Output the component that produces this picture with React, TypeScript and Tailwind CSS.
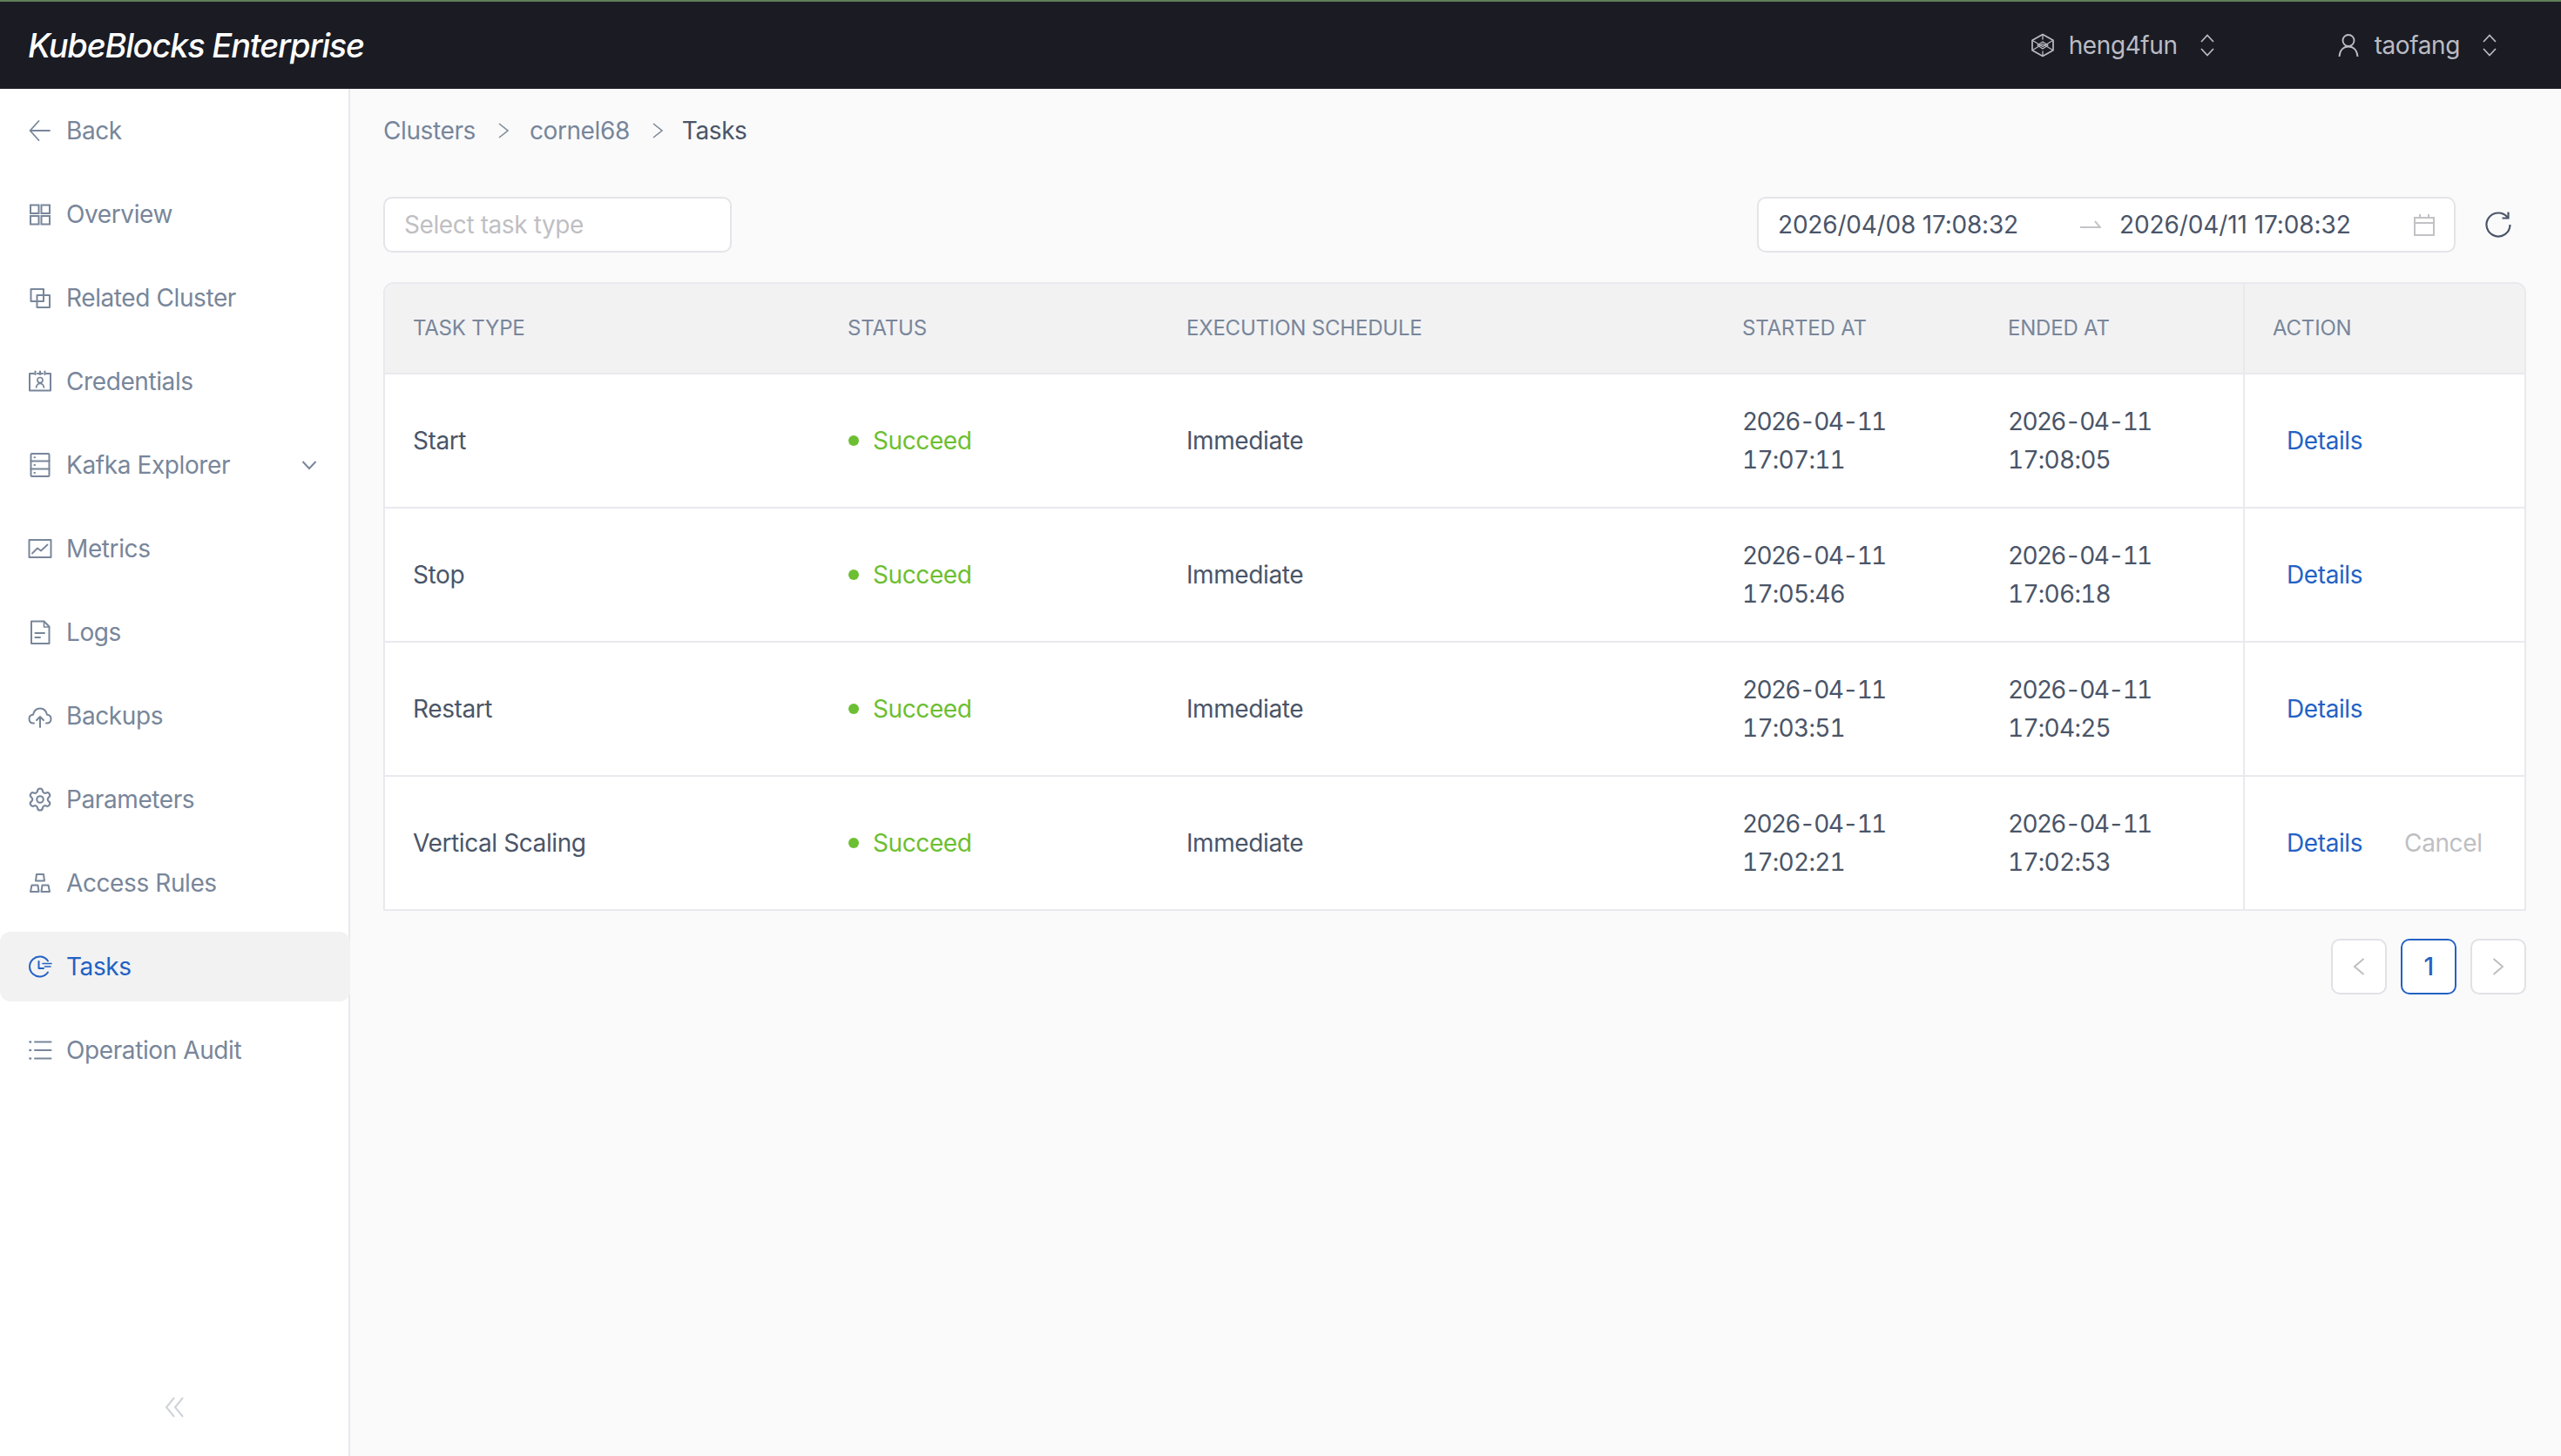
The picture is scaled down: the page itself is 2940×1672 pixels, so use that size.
import { Settings } from 'lucide-react'
import type { ReactNode } from 'react'

const stroke = {
  fill: 'none',
  stroke: 'currentColor',
  strokeWidth: 2,
  strokeLinecap: 'round' as const,
  strokeLinejoin: 'round' as const,
}

function Ico({ children }: { children: ReactNode }) {
  return (
    <svg viewBox="0 0 28 28" className="w-7 h-7 shrink-0" {...stroke}>
      {children}
    </svg>
  )
}

const icons: Record<string, ReactNode> = {
  back: (
    <Ico>
      <path d="M3 14H25M12.5 3L2.5 14L12.5 25" strokeWidth={1.8} />
    </Ico>
  ),
  overview: (
    <Ico>
      <rect x="3" y="3.5" width="9.5" height="9.5" strokeLinejoin="miter" />
      <rect x="15.5" y="3.5" width="9.5" height="9.5" strokeLinejoin="miter" />
      <rect x="3" y="16" width="9.5" height="9.5" strokeLinejoin="miter" />
      <rect x="15.5" y="16" width="9.5" height="9.5" strokeLinejoin="miter" />
    </Ico>
  ),
  related: (
    <Ico>
      <rect x="3.5" y="4" width="14.5" height="14" />
      <rect x="10.5" y="11" width="14.5" height="14" />
    </Ico>
  ),
  credentials: (
    <Ico>
      <path d="M7 5H2V24.5H26V5H21M11 5H17" />
      <path d="M8.5 2.5V6M14 2.5V6M19.5 2.5V6" />
      <circle cx="14" cy="12.5" r="3" strokeWidth={1.7} />
      <path d="M9.5 21C10 18 11.8 16.5 14 16.5S18 18 18.5 21" strokeWidth={1.7} />
    </Ico>
  ),
  kafka: (
    <Ico>
      <rect x="3.5" y="1" width="21" height="26" rx="1" />
      <path d="M3.5 9.5H24.5M3.5 18.5H24.5" />
      <path d="M7.5 5.2H8M7.5 14H8M7.5 23H8" />
    </Ico>
  ),
  metrics: (
    <Ico>
      <rect x="1.5" y="4" width="25" height="20" />
      <path d="M5 19.5L11 13.5L15 16.5L22.5 9.5" strokeWidth={1.8} />
    </Ico>
  ),
  logs: (
    <Ico>
      <path d="M4 1.5H18.5L24.5 7.5V27H4Z" />
      <path d="M18.5 1.5V8H24.5" strokeWidth={1.6} />
      <path d="M8.5 15H19M8.5 20H14" />
    </Ico>
  ),
  backups: (
    <Ico>
      <path d="M7 22.5H6.5C3.5 22.5 1.5 20.5 1.5 17.5C1.5 14.8 3.5 13 6 12.8C7 8 10 5.5 14 5.5S21 8 22 12.8C24.5 13 26.5 14.8 26.5 17.5C26.5 20.5 24.5 22.5 21.5 22.5H21" />
      <path d="M14 27V15M10 19L14 15L18 19" />
    </Ico>
  ),
  parameters: <Settings className="w-[30px] h-[30px] -mx-px shrink-0" strokeWidth={1.7} />,
  access: (
    <Ico>
      <path d="M10 4H18L19 11.5H9Z" />
      <path d="M4.5 16.5H11.5L12.5 24H3Z" />
      <path d="M16.5 16.5H23.5L25 24H15.5Z" />
    </Ico>
  ),
  tasks: (
    <Ico>
      <path d="M23 7.5A11.5 11.5 0 1 0 23 20.5" />
      <path d="M12.5 8V16H18" />
      <path d="M17 10.5H27M19.5 14H26" strokeWidth={1.6} />
    </Ico>
  ),
  audit: (
    <Ico>
      <path d="M8 4.5H26.5M8 14H26.5M8 23.5H26.5" />
      <path d="M2.5 4.5H3M2.5 14H3M2.5 23.5H3" strokeWidth={2.6} />
    </Ico>
  ),
}

const menu = [
  { key: 'back', label: 'Back' },
  { key: 'overview', label: 'Overview' },
  { key: 'related', label: 'Related Cluster' },
  { key: 'credentials', label: 'Credentials' },
  { key: 'kafka', label: 'Kafka Explorer', arrow: true },
  { key: 'metrics', label: 'Metrics' },
  { key: 'logs', label: 'Logs' },
  { key: 'backups', label: 'Backups' },
  { key: 'parameters', label: 'Parameters' },
  { key: 'access', label: 'Access Rules' },
  { key: 'tasks', label: 'Tasks', active: true },
  { key: 'audit', label: 'Operation Audit' },
]

const rows = [
  { type: 'Start', started: '17:07:11', ended: '17:08:05' },
  { type: 'Stop', started: '17:05:46', ended: '17:06:18' },
  { type: 'Restart', started: '17:03:51', ended: '17:04:25' },
  { type: 'Vertical Scaling', started: '17:02:21', ended: '17:02:53', cancel: true },
]

const gridCols = 'grid grid-cols-[499px_389px_638px_305px_302px_322px]'

function UpDown() {
  return (
    <svg viewBox="0 0 16 26" className="w-4 h-[26px]" fill="none" stroke="currentColor" strokeWidth="1.7">
      <path d="M1 9L8 1.5L15 9M1 17L8 24.5L15 17" />
    </svg>
  )
}

function Chevron() {
  return (
    <svg viewBox="0 0 14 20" className="w-[14px] h-5 text-[#7c8896]" fill="none" stroke="currentColor" strokeWidth="1.6">
      <path d="M2 2L12 10L2 18" />
    </svg>
  )
}

function Stamp({ time }: { time: string }) {
  return (
    <div className="pl-8 tabular-nums">
      <div className="tracking-[-1.7px]">2026-04-11</div>
      <div className="tracking-[-0.75px]">{time}</div>
    </div>
  )
}

export default function App() {
  return (
    <div className="h-[1672px] flex flex-col bg-[#fafafb] font-['Inter','Liberation_Sans',sans-serif] text-[28px] tracking-[-0.4px] text-[#4a5568] overflow-hidden">
      <header className="h-[102px] shrink-0 border-t-2 border-[#5f7f58] bg-[#1a1b23] flex items-center justify-between">
        <div className="pl-[32px] text-[38px] font-medium italic text-white tracking-[-1.2px]">KubeBlocks Enterprise</div>
        <div className="flex items-center text-[#babcc4] pr-[74px]">
          <svg viewBox="0 0 26 28" className="w-[26px] h-7" fill="none" stroke="currentColor" strokeWidth="1.7" strokeLinejoin="round">
            <path d="M13 1.5L25 8.3V19.7L13 26.5L1 19.7V8.3Z" />
            <path d="M1 8.3L13 15.5L25 8.3M1 19.7L13 12.5L25 19.7M13 1.5V7.5M13 20.5V26.5M7 14L13 10L19 14L13 18Z" strokeWidth="1.3" />
          </svg>
          <span className="ml-[17px]">heng4fun</span>
          <span className="ml-[26px]"><UpDown /></span>
          <svg viewBox="0 0 24 28" className="ml-[142px] w-6 h-7" fill="none" stroke="currentColor" strokeWidth="1.9">
            <circle cx="12" cy="8.5" r="6.5" />
            <path d="M1.5 27C2 20 6 15.5 12 15.5S22 20 22.5 27" />
          </svg>
          <span className="ml-[18px]">taofang</span>
          <span className="ml-[26px]"><UpDown /></span>
        </div>
      </header>

      <div className="flex-1 flex min-h-0">
        <aside className="w-[402px] shrink-0 bg-white border-r-2 border-[#e9e9ee] flex flex-col pt-2">
          <nav className="flex flex-col gap-4 flex-1">
            {menu.map((m) => (
              <div
                key={m.key}
                className={
                  'h-20 pl-8 pr-[36px] flex items-center gap-4 ' +
                  (m.active ? 'bg-[#f2f2f3] rounded-xl text-[#2362c4] -mr-[2px]' : 'text-[#78869a]')
                }
              >
                {icons[m.key]}
                <span className="flex-1">{m.label}</span>
                {m.arrow && (
                  <svg viewBox="0 0 18 12" className="w-[18px] h-3" fill="none" stroke="currentColor" strokeWidth="2">
                    <path d="M1.5 2L9 10L16.5 2" />
                  </svg>
                )}
              </div>
            ))}
          </nav>
          <div className="h-[112px] flex items-center justify-center text-[#cfd3d9]">
            <svg viewBox="0 0 22 24" className="w-[22px] h-6 -mt-[1px]" fill="none" stroke="currentColor" strokeWidth="2">
              <path d="M11 1L2 12L11 23M21 1L12 12L21 23" />
            </svg>
          </div>
        </aside>

        <main className="flex-1 min-w-0 pl-[38px] pr-10">
          <div className="h-24 flex items-center text-[#77869a]">
            <span>Clusters</span>
            <span className="ml-[25px]"><Chevron /></span>
            <span className="ml-[23px]">cornel68</span>
            <span className="ml-[25px]"><Chevron /></span>
            <span className="ml-[21px] text-[#4a5568]">Tasks</span>
          </div>

          <div className="mt-[28px] flex items-center justify-between">
            <div className="w-[400px] h-16 rounded-[10px] border-2 border-[#e4e4e9] bg-white pl-[22px] flex items-center text-[#bfbfc3]">
              Select task type
            </div>
            <div className="flex items-center">
              <div className="w-[802px] h-16 rounded-[10px] border-2 border-[#e4e4e9] bg-white pl-[22px] flex items-center tracking-[-0.2px]">
                <span className="w-[347px]">2026/04/08 17:08:32</span>
                <svg viewBox="0 0 24 12" className="w-6 h-3 text-[#c4c4c8]" fill="none" stroke="currentColor" strokeWidth="2">
                  <path d="M0 9H23L17 2" />
                </svg>
                <span className="ml-[21px] tracking-[-0.1px]">2026/04/11 17:08:32</span>
                <svg viewBox="0 0 26 26" className="ml-[71px] w-[26px] h-[26px] text-[#c2c2c6]" fill="none" stroke="currentColor" strokeWidth="2">
                  <path d="M2 5H24V25H2ZM2 11H24M8 1V5M18 1V5" />
                </svg>
              </div>
              <svg viewBox="0 0 32 32" className="ml-[33px] mr-[16px] w-8 h-8 text-[#4a5568]" fill="none" stroke="currentColor" strokeWidth="2.2">
                <path d="M26.5 7.5A13.5 13.5 0 1 0 29.5 16" />
                <path d="M27.5 1.5V8.5H20.5" strokeLinejoin="miter" />
              </svg>
            </div>
          </div>

          <div className="mt-[34px] rounded-t-xl border-2 border-[#e9e9ee] bg-white">
            <div className={gridCols + ' h-[102px] items-center bg-[#f2f2f3] border-b-2 border-[#e9e9ee] rounded-t-[10px] text-[24px] tracking-[-0.2px] text-[#78869a] box-content'}>
              <div className="pl-8">TASK TYPE</div>
              <div className="pl-8">STATUS</div>
              <div className="pl-8">EXECUTION SCHEDULE</div>
              <div className="pl-8">STARTED AT</div>
              <div className="pl-8">ENDED AT</div>
              <div className="pl-8 h-full flex items-center border-l-2 border-[#e9e9ee]">ACTION</div>
            </div>
            {rows.map((r, i) => (
              <div
                key={r.type}
                className={gridCols + ' items-center leading-[44px] ' + (i < rows.length - 1 ? 'h-[154px] border-b-2 border-[#e9e9ee]' : 'h-[152px]')}
              >
                <div className="pl-8">{r.type}</div>
                <div className="pl-8 flex items-center text-[#6cbf32]">
                  <span className="w-3 h-3 rounded-full bg-[#6cbf32] mr-[16px] ml-px" />
                  Succeed
                </div>
                <div className="pl-8">Immediate</div>
                <Stamp time={r.started} />
                <Stamp time={r.ended} />
                <div className="pl-12 h-full flex items-center border-l-2 border-[#e9e9ee] text-[#2362c4]">
                  <span>Details</span>
                  {r.cancel && <span className="ml-[48px] text-[#bfbfc3]">Cancel</span>}
                </div>
              </div>
            ))}
          </div>

          <div className="mt-8 flex justify-end gap-4">
            <div className="w-16 h-16 rounded-[10px] border-2 border-[#e1e1e6] bg-white flex items-center justify-center text-[#bfbfc3]">
              <svg viewBox="0 0 14 24" className="w-[14px] h-6" fill="none" stroke="currentColor" strokeWidth="2"><path d="M12.5 3L2 12L12.5 21" /></svg>
            </div>
            <div className="w-16 h-16 rounded-[10px] border-2 border-[#2362c4] bg-white flex items-center justify-center text-[#2362c4] font-medium">1</div>
            <div className="w-16 h-16 rounded-[10px] border-2 border-[#e1e1e6] bg-white flex items-center justify-center text-[#bfbfc3]">
              <svg viewBox="0 0 14 24" className="w-[14px] h-6" fill="none" stroke="currentColor" strokeWidth="2"><path d="M1.5 3L12 12L1.5 21" /></svg>
            </div>
          </div>
        </main>
      </div>
    </div>
  )
}
